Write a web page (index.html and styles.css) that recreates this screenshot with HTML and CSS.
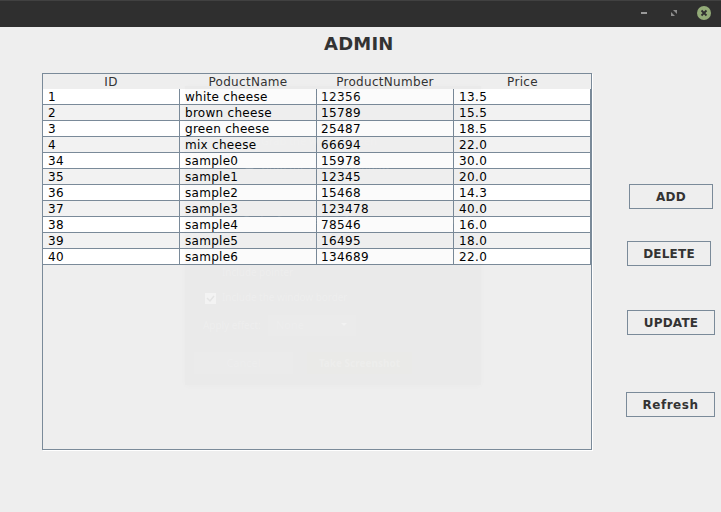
FILE: index.html
```html
<!DOCTYPE html>
<html lang="en">
<head>
<meta charset="utf-8">
<title>Admin</title>
<link rel="stylesheet" href="styles.css">
</head>
<body>
<header class="titlebar">
  <svg class="win-icon" viewBox="0 0 14 14"><rect x="4" y="6" width="6" height="2" fill="#999"/></svg>
  <svg class="win-icon" viewBox="0 0 14 14"><path d="M6 4h4v4zM4 6v4h4z" fill="#8c8c8c"/></svg>
  <svg class="win-icon" viewBox="0 0 14 14"><circle cx="7" cy="7" r="7" fill="#93ab78"/><path d="M4.500 4.500l5 5M9.500 4.500l-5 5" stroke="#303030" stroke-width="1.8"/></svg>
</header>
<h1>ADMIN</h1>
<main>
  <section class="pane">
    <table>
      <thead><tr><th>ID</th><th>PoductName</th><th>ProductNumber</th><th>Price</th></tr></thead>
      <tbody>
        <tr><td>1</td><td class="name">white cheese</td><td>12356</td><td>13.5</td></tr>
        <tr><td>2</td><td class="name">brown cheese</td><td>15789</td><td>15.5</td></tr>
        <tr><td>3</td><td class="name">green cheese</td><td>25487</td><td>18.5</td></tr>
        <tr><td>4</td><td class="name">mix cheese</td><td>66694</td><td>22.0</td></tr>
        <tr><td>34</td><td class="name">sample0</td><td>15978</td><td>30.0</td></tr>
        <tr><td>35</td><td class="name">sample1</td><td>12345</td><td>20.0</td></tr>
        <tr><td>36</td><td class="name">sample2</td><td>15468</td><td>14.3</td></tr>
        <tr><td>37</td><td class="name">sample3</td><td>123478</td><td>40.0</td></tr>
        <tr><td>38</td><td class="name">sample4</td><td>78546</td><td>16.0</td></tr>
        <tr><td>39</td><td class="name">sample5</td><td>16495</td><td>18.0</td></tr>
        <tr><td>40</td><td class="name">sample6</td><td>134689</td><td>22.0</td></tr>
      </tbody>
    </table>
    <div class="ghost">
      <b class="g-title">Take Screenshot</b>
      <span class="g-whole">Grab the whole screen</span>
      <i class="g-radio"></i>
      <span class="g-current">Grab the current window</span>
      <span class="g-area">Select area to grab</span>
      <span class="g-delay">Grab after a delay of</span>
      <span class="g-seconds">seconds</span>
      <span class="g-pointer">Include pointer</span>
      <svg class="g-check" viewBox="0 0 11 11"><path d="M0 0h11v11H0z" fill="#fff"/><path d="M2 5l3 3 4-5" fill="none" stroke="#ddd" stroke-width="1.500"/></svg>
      <span class="g-border">Include the window border</span>
      <span class="g-effect">Apply effect:</span>
      <span class="g-select">None</span>
      <i class="g-arrow"></i>
      <span class="g-cancel">Cancel</span>
      <b class="g-take">Take Screenshot</b>
    </div>
  </section>
  <nav>
    <button class="add">ADD</button>
    <button class="delete">DELETE</button>
    <button class="update">UPDATE</button>
    <button class="refresh">Refresh</button>
  </nav>
</main>
</body>
</html>
```
FILE: styles.css
```css
* { box-sizing: border-box; }
body { margin: 0; height: 512px; overflow: hidden; background: #eee; color: #333; font: 12px/15px "DejaVu Sans", sans-serif; }
.titlebar { height: 27px; background: #2f2f2f; border-top: 1px solid #414141; display: flex; justify-content: flex-end; gap: 16px; padding: 5px 10px 0 0; }
.win-icon { width: 14px; height: 14px; overflow: visible; }
h1 { margin: 0; height: 46px; padding: 6px 0 0 324px; font-size: 18px; line-height: 22px; letter-spacing: .2px; }
main { display: flex; padding-left: 42px; }
.pane { position: relative; width: 550px; height: 377px; border: 1px solid #7a8a99; box-shadow: 1px 1px 0 #fff; }
table { width: 548px; table-layout: fixed; border-collapse: separate; border-spacing: 0; }
th { height: 15px; padding: 1px 1px 0 0; font-weight: 400; letter-spacing: .3px; line-height: 14px; }
th:last-child { padding-right: 0; }
td { height: 16px; padding: 1px 0 0 5px; border-right: 1px solid #7a8a99; border-bottom: 1px solid #7a8a99; background: #fff; color: #000; line-height: 14px; letter-spacing: .37px; }
tr:nth-child(even) td { background: #f2f2f2; }
td.name { letter-spacing: .28px; }
td:nth-child(3) { padding-left: 4px; }
nav { width: 89px; margin-left: 34px; padding-top: 111px; display: flex; flex-direction: column; align-items: flex-start; }
button { height: 25px; padding: 0; border: 1px solid #7a8a99; background: #eee; color: #333; font: bold 12px/22px "DejaVu Sans", sans-serif; letter-spacing: .2px; }
.add { width: 84px; margin-left: 3px; }
.delete { width: 84px; margin: 32px 0 0 1px; }
.update { width: 88px; margin: 44px 0 0 1px; }
.refresh { width: 89px; margin-top: 57px; letter-spacing: .5px; }
/* Fading dialog above the table */
.ghost { position: absolute; left: 142px; top: 12px; width: 296px; height: 299px; background: rgba(40,40,40,.018); box-shadow: 0 1px 7px rgba(0,0,0,.02); color: rgba(255,255,255,.2); font: 11px/14px "Noto Sans", sans-serif; }
.ghost > * { position: absolute; white-space: nowrap; }
.g-title { left: 104px; top: 3px; font-size: 12px; color: rgba(255,255,255,.12); }
.g-whole { left: 76px; top: 48px; }
.g-radio { left: 59px; top: 73px; width: 11px; height: 11px; border-radius: 50%; background: rgba(255,255,255,.12); }
.g-current { left: 76px; top: 73px; }
.g-area { left: 76px; top: 98px; }
.g-whole, .g-current, .g-area, .g-delay, .g-seconds { color: rgba(255,255,255,.12); }
.g-delay { left: 57px; top: 127px; }
.g-seconds { left: 250px; top: 127px; }
.g-pointer { left: 37px; top: 179px; }
.g-check { left: 20px; top: 207px; width: 11px; height: 11px; opacity: .45; }
.g-border { left: 37px; top: 204px; }
.g-effect { left: 18px; top: 232px; }
.g-pointer, .g-border, .g-effect { font-size: 10px; }
.g-select { left: 83px; top: 229px; width: 88px; height: 21px; padding: 3px 8px; background: rgba(255,255,255,.06); color: rgba(255,255,255,.15); }
.g-arrow { left: 156px; top: 237px; border: 3px solid transparent; border-top-color: rgba(255,255,255,.35); border-bottom: 0; }
.g-cancel { left: 9px; top: 266px; width: 99px; height: 22px; padding-top: 4px; text-align: center; background: rgba(255,255,255,.06); color: rgba(255,255,255,.15); }
.g-take { left: 122px; top: 266px; width: 105px; height: 22px; padding-top: 4px; font-size: 10px; text-align: center; background: rgba(240,240,215,.1); }
.g-pointer, .g-border, .g-effect { letter-spacing: -.05px; }
```
